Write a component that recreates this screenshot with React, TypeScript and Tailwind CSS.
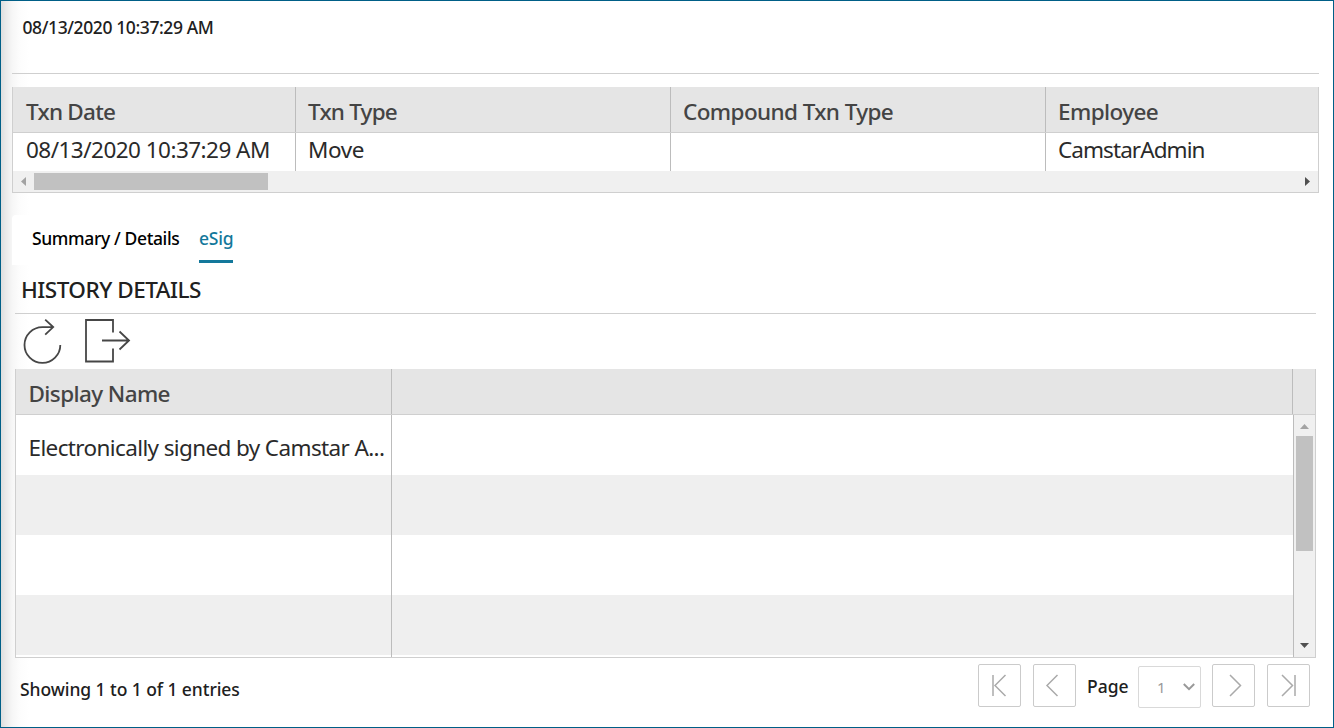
import type { ReactNode } from "react";

const columns = [
  { title: "Txn Date", value: "08/13/2020 10:37:29 AM", width: "w-[283px] pl-[13px]", head: "tracking-[-0.75px]", cell: "tracking-[-0.53px]" },
  { title: "Txn Type", value: "Move", width: "w-[375px] pl-[12px]", head: "tracking-[-0.8px]", cell: "tracking-[-0.4px]" },
  { title: "Compound Txn Type", value: "", width: "w-[375px] pl-[12px]", head: "tracking-[-0.6px]", cell: "tracking-[0px]" },
  { title: "Employee", value: "CamstarAdmin", width: "w-[272px] pl-[12px]", head: "tracking-[-0.6px]", cell: "tracking-[-0.93px]" },
];

const rows = ["Electronically signed by Camstar A...", "", "", ""];

function PageButton({ label, className, children }: { label: string; className: string; children: ReactNode }) {
  return (
    <button
      aria-label={label}
      className={`h-[43px] w-[43px] shrink-0 rounded-[2px] border border-[#cbcbcb] bg-white ${className}`}
    >
      <svg className="block h-[41px] w-[41px]" viewBox="0 0 41 41" fill="none" stroke="#aaaaaa" strokeWidth="1.5">
        {children}
      </svg>
    </button>
  );
}

function TransactionGrid() {
  return (
    <div className="mt-[13px] ml-[11px] h-[106px] w-[1307px] border-x border-b border-[#cfcfcf] bg-white">
      <div className="flex h-[46px] border-b border-[#cfcfcf] bg-[#e5e5e5] text-[22.5px] font-medium text-[#444]">
        {columns.map((c, i) => (
          <div
            key={c.title}
            className={`h-[45px] shrink-0 pt-[3px] leading-[44px] whitespace-nowrap ${c.width} ${c.head} ${i < 3 ? "border-r border-[#bcbcbc]" : ""}`}
          >
            {c.title}
          </div>
        ))}
      </div>
      <div className="flex h-[38px] text-[22.5px] text-[#2a2a2a]">
        {columns.map((c, i) => (
          <div
            key={c.title}
            className={`h-[38px] shrink-0 leading-[34px] whitespace-nowrap ${c.width} ${c.cell} ${i < 3 ? "border-r border-[#bcbcbc]" : ""}`}
          >
            {c.value}
          </div>
        ))}
      </div>
      <div className="flex h-[21px] items-center justify-between bg-[#f0f0f0] pr-[8px] pl-[8px]">
        <div className="flex items-center gap-[8px]">
          <svg className="h-[9px] w-[5px]" viewBox="0 0 5 9"><path d="M5 0v9L0 4.5z" fill="#a3a3a3" /></svg>
          <div className="h-[17px] w-[234px] bg-[#c1c1c1]" />
        </div>
        <svg className="h-[9px] w-[5px]" viewBox="0 0 5 9"><path d="M0 0v9l5-4.5z" fill="#505050" /></svg>
      </div>
    </div>
  );
}

function SignatureGrid() {
  return (
    <div className="ml-[14px] h-[289px] w-[1301px] border-x border-b border-[#cfcfcf] bg-white">
      <div className="flex h-[46px] border-b border-[#cfcfcf] bg-[#e5e5e5]">
        <div className="h-[45px] w-[376px] border-r border-[#bcbcbc] pt-[3px] pl-[12.5px] text-[22.5px] leading-[44px] font-medium tracking-[-0.6px] whitespace-nowrap text-[#444]">
          Display Name
        </div>
        <div className="h-[45px] w-[901px] border-r border-[#bcbcbc]" />
      </div>
      <div className="flex h-[242px]">
        <div className="w-[1277px]">
          {rows.map((text, i) => (
            <div key={i} className={`flex h-[60px] ${i % 2 ? "bg-[#efefef]" : "bg-white"}`}>
              <div className="w-[376px] border-r border-[#bcbcbc] pt-[5px] pl-[12.5px] text-[22.5px] leading-[55px] tracking-[-0.62px] whitespace-nowrap text-[#2a2a2a]">
                {text}
              </div>
            </div>
          ))}
          <div className="h-[2px] w-[376px] border-r border-[#bcbcbc]" />
        </div>
        <div className="flex w-[22px] flex-col items-center border-l border-[#bcbcbc] bg-[#f0f0f0] pt-[9px] pb-[9px]">
          <svg className="h-[5px] w-[9px] shrink-0" viewBox="0 0 9 5"><path d="M0 5h9L4.5 0z" fill="#a3a3a3" /></svg>
          <div className="mt-[7px] h-[115px] w-[17px] shrink-0 bg-[#c1c1c1]" />
          <svg className="mt-auto h-[5px] w-[9px] shrink-0" viewBox="0 0 9 5"><path d="M0 0h9L4.5 5z" fill="#505050" /></svg>
        </div>
      </div>
    </div>
  );
}

export default function App() {
  return (
    <div className="h-[728px] w-[1334px] overflow-hidden border border-[#005f87] bg-white bg-[linear-gradient(90deg,#dedede_0px,#eaeaea_5px,#f6f6f6_11px,#fcfcfc_18px,#ffffff_28px)] font-['Noto_Sans','Open_Sans',sans-serif]">
      <header className="ml-[11px] h-[73px] w-[1307px] border-b border-[#cfcfcf] pt-[12px] pl-[10.500px] text-[17.5px] leading-[28px] font-medium text-[#202020]">
        <span className="tracking-[-0.4px]">08/13/2020 10:37:29 AM</span>
      </header>
      <TransactionGrid />

      <nav className="mt-[22px] ml-[11px] flex h-[50px] w-[1307px] rounded-tl-[4px] bg-white pl-[20px] text-[17.5px] font-medium">
        <div className="mr-[20px] h-[48px] w-[147px] leading-[46px] whitespace-nowrap text-black">
          <span className="tracking-[-0.37px]">Summary / Details</span>
        </div>
        <div className="h-[48px] w-[34px] border-b-3 border-[#13789b] leading-[46px] text-[#13789b]">
          <span className="tracking-[-0.25px]">eSig</span>
        </div>
      </nav>

      <h2 className="ml-[14px] h-[49px] w-[1301px] border-b border-[#cfcfcf] pl-[6px] text-[22.5px] leading-[50px] font-medium text-[#202020]">
        <span className="tracking-[-0.5px]">HISTORY DETAILS</span>
      </h2>

      <div className="ml-[14px] flex h-[55px] gap-[20px] pl-[7px]">
        <svg className="h-[55px] w-[42px]" viewBox="0 0 42 55" fill="none" stroke="#464646" strokeWidth="1.8">
          <path d="M38.300 31A17.900 17.900 0 1 1 20.400 13.100H31.200M23.200 5.600L31.200 13.100L23.200 20.600" />
        </svg>
        <svg className="h-[55px] w-[50px]" viewBox="0 0 50 55" fill="none" stroke="#464646" strokeWidth="1.8">
          <path d="M29 18.500V6H2V47.500H29V34.500M18 26.500H45M35.500 17.500L45 26.500L35.500 35.500" />
        </svg>
      </div>

      <SignatureGrid />

      <footer className="flex pt-[6px] pl-[19px] text-[17.5px] font-medium text-[#202020]">
        <div className="w-[958px] leading-[50px]">
          <span className="tracking-[-0.07px]">Showing 1 to 1 of 1 entries</span>
        </div>
        <PageButton label="First page" className="mr-[12px]">
          <path d="M14 10V31M26.500 10L16 20.500L26.500 31" />
        </PageButton>
        <PageButton label="Previous page" className="mr-[11px]">
          <path d="M23.500 10L13 20.500L23.500 31" />
        </PageButton>
        <div className="w-[51px] leading-[44px]">
          <span className="tracking-[0px]">Page</span>
        </div>
        <div className="mt-[2px] mr-[11px] flex h-[42px] w-[63px] items-center rounded-[2px] border border-[#d9d9d9] bg-white pl-[18px] text-[15px] font-normal text-[#999]">
          <span className="w-[26px]">1</span>
          <svg className="h-[8px] w-[12px]" viewBox="0 0 12 8" fill="none" stroke="#999" strokeWidth="2">
            <path d="M.8 1L6 6.200L11.200 1" />
          </svg>
        </div>
        <PageButton label="Next page" className="mr-[12px]">
          <path d="M17 10L27.500 20.500L17 31" />
        </PageButton>
        <PageButton label="Last page" className="">
          <path d="M14 10L24.500 20.500L14 31M27 10V31" />
        </PageButton>
      </footer>
    </div>
  );
}
